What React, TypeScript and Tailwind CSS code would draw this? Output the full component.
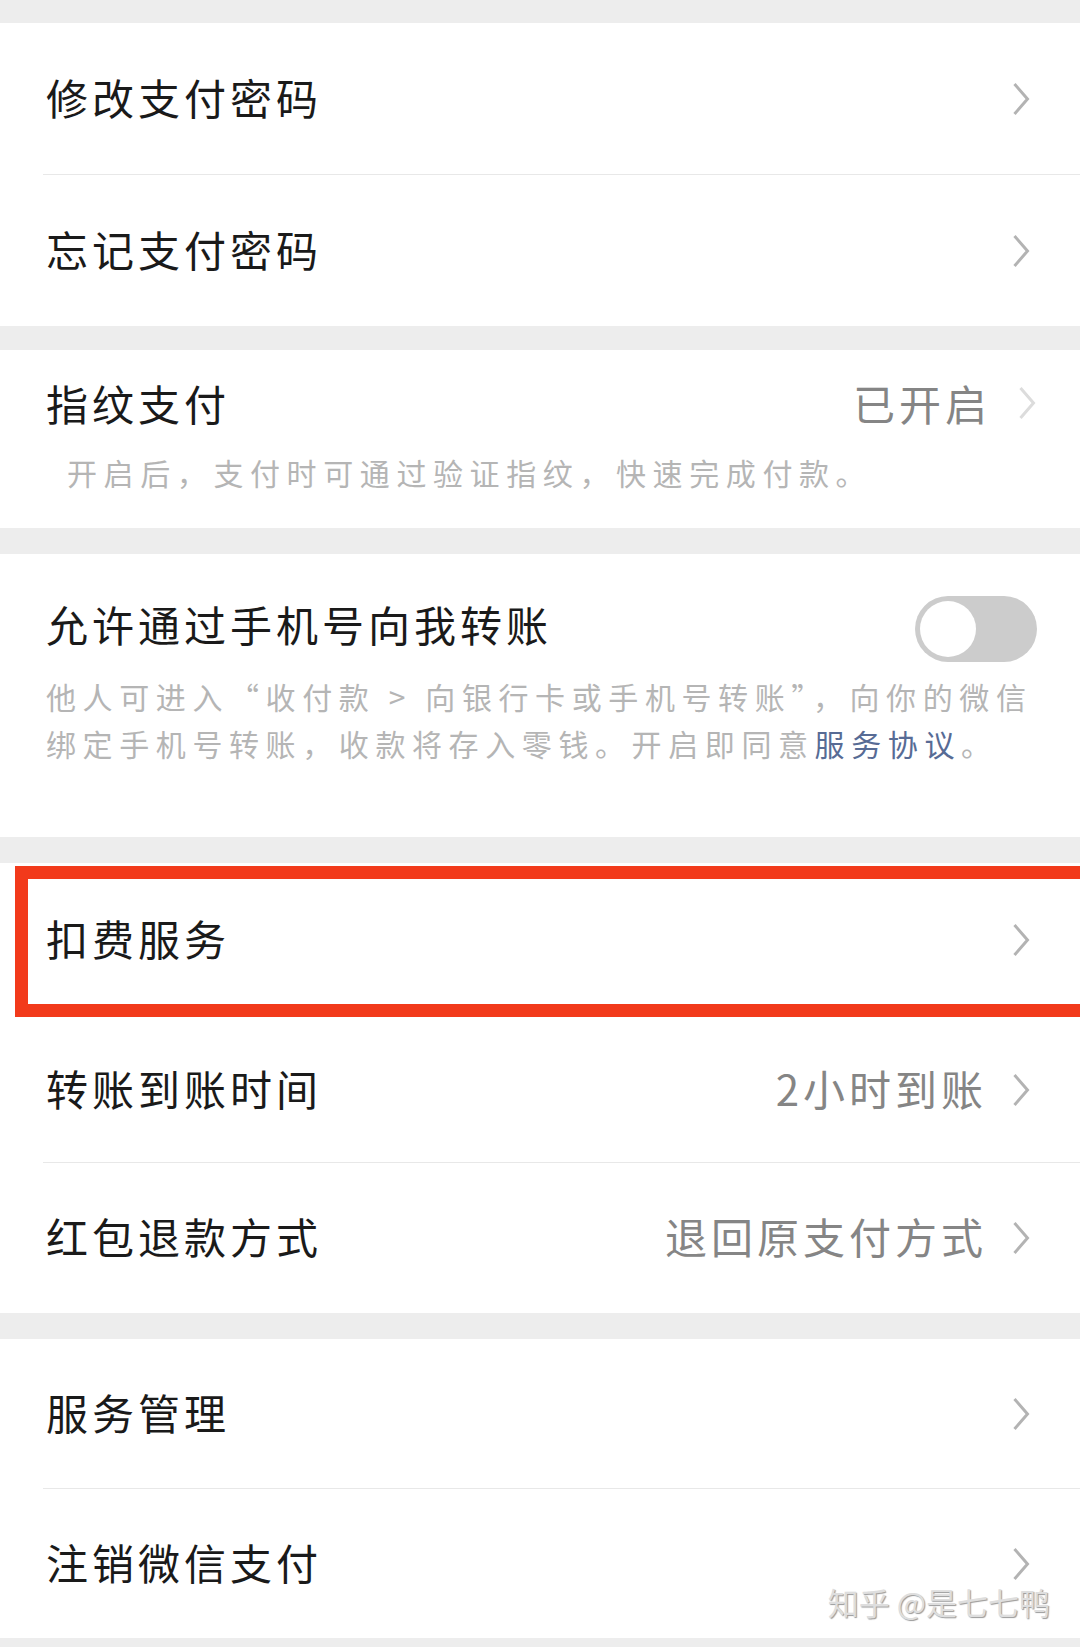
import React from "react";

const font = "font-['Noto_Sans_CJK_SC','Noto_Sans',sans-serif]";

function Chevron({ light = false }: { light?: boolean }) {
  return (
    <svg width="20" height="36" viewBox="0 0 20 36" className="shrink-0">
      <path
        d="M3.5 3 L16.5 18 L3.5 33"
        fill="none"
        stroke={light ? "#dcdcdc" : "#b3b3b3"}
        strokeWidth="3"
        strokeLinejoin="miter"
      />
    </svg>
  );
}

// inset hairline between rows of one group
function Divider() {
  return (
    <div className="bg-white pl-[43px]">
      <div className="h-px bg-[#e8e8e8]" />
    </div>
  );
}

function Gap({ h }: { h: string }) {
  return <div className={`${h} bg-[#ededed]`} />;
}

function Row({
  title,
  value,
  height,
  children,
}: {
  title: string;
  value?: string;
  height: string;
  children?: React.ReactNode;
}) {
  return (
    <div className={`relative flex items-center justify-between bg-white pl-[46px] pr-[49px] ${height}`}>
      <span className="-mt-[4px] text-[42px] leading-[56px] tracking-[4px] text-[#1a1a1a]">{title}</span>
      <div className="flex items-center gap-[24px]">
        {value && (
          <span className="-mt-[4px] text-[42px] leading-[56px] tracking-[4px] text-[#858585]">{value}</span>
        )}
        <Chevron />
      </div>
      {children}
    </div>
  );
}

export default function App() {
  return (
    <div className={`${font} w-[1080px] h-[1647px] overflow-hidden bg-[#ededed]`}>
      <Gap h="h-[23px]" />

      <Row title="修改支付密码" height="h-[151px]" />
      <Divider />
      <Row title="忘记支付密码" height="h-[151px]" />

      <Gap h="h-[24px]" />

      {/* Fingerprint */}
      <div className="h-[178px] bg-white pt-[25px]">
        <div className="flex items-center justify-between pl-[46px] pr-[43px]">
          <span className="text-[42px] leading-[56px] tracking-[4px] text-[#1a1a1a]">指纹支付</span>
          <div className="flex items-center gap-[26px]">
            <span className="text-[42px] leading-[56px] tracking-[4px] text-[#858585]">已开启</span>
            <Chevron light />
          </div>
        </div>
        <p className="mt-[18px] pl-[67px] text-[30px] leading-[47px] tracking-[6.6px] text-[#b5b5b5]">
          开启后，支付时可通过验证指纹，快速完成付款。
        </p>
      </div>

      <Gap h="h-[26px]" />

      {/* Transfer by phone */}
      <div className="h-[283px] bg-white pt-[37px]">
        <div className="flex items-center justify-between pl-[46px] pr-[43px]">
          <span className="text-[42px] leading-[56px] tracking-[4px] text-[#1a1a1a]">允许通过手机号向我转账</span>
          <div className="flex h-[66px] w-[122px] translate-y-[5px] items-center rounded-full bg-[#cccccc] px-[5px]">
            <div className="h-[56px] w-[56px] rounded-full bg-white" />
          </div>
        </div>
        <div className="mt-[16px] pl-[46px] text-[30px] leading-[47px] tracking-[6.6px] text-[#b5b5b5] whitespace-nowrap">
          <p>他人可进入“收付款 &gt; 向银行卡或手机号转账”，向你的微信</p>
          <p>
            绑定手机号转账，收款将存入零钱。开启即同意<span className="text-[#576b95]">服务协议</span>。
          </p>
        </div>
      </div>

      <Gap h="h-[26px]" />

      <Row title="扣费服务" height="h-[154px]">
        <div className="pointer-events-none absolute left-[15px] top-[3px] bottom-0 -right-[20px] border-[13px] border-[#f23a1b]" />
      </Row>
      <Row title="转账到账时间" value="2小时到账" height="h-[145px]" />
      <Divider />
      <Row title="红包退款方式" value="退回原支付方式" height="h-[150px]" />

      <Gap h="h-[26px]" />

      <Row title="服务管理" height="h-[149px]" />
      <Divider />
      <Row title="注销微信支付" height="h-[149px]">
        <span className="absolute right-[30px] top-[97px] text-[31px] leading-none text-[#dedede] [text-shadow:1px_1px_1px_#9a9a9a]">
          知乎 @是七七鸭
        </span>
      </Row>

      <Gap h="h-[9px]" />
    </div>
  );
}
